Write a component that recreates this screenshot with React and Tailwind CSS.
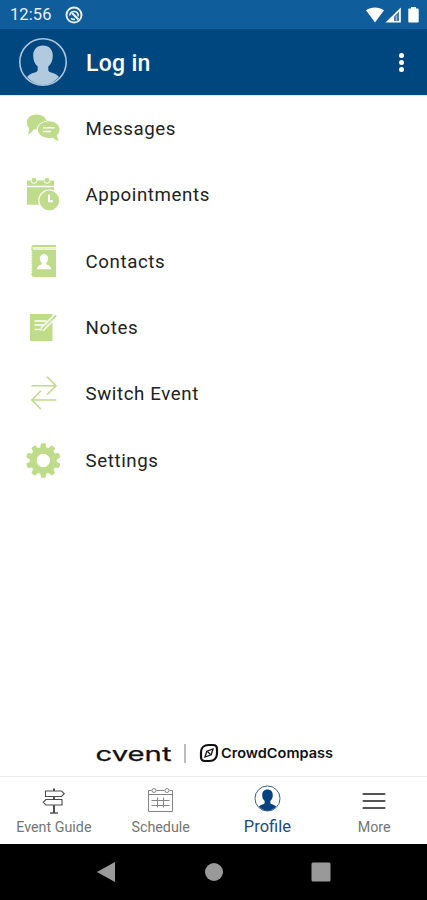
import { useState } from 'react';

const MessagesIcon = () => (
  <svg viewBox="0 0 40 40" className="w-10 h-10" fill="#bfdc8a">
    <path d="M13.5 5.500c5.500 0 9.700 3 9.700 6.600-5 .6-9.200 3.900-9.700 8.400-1 .2-2 .1-3-.1C9 23 7 24.800 4.700 25.500c1-2 1.600-4 1.400-6.300C4.500 17.500 3.800 15.500 3.800 13c0-4.200 4.300-7.500 9.700-7.500z" />
    <path d="M25.700 12.300c6 0 10.800 3.500 10.800 8.200 0 2.400-1 4.200-2.600 5.700.1 2.200 1 4.200 2.300 5.800-2.500-.3-4.800-1.600-6.300-3.500-1.300.4-2.700.6-4.200.6-6 0-10.800-3.800-10.800-8.500s4.800-8.300 10.800-8.300z" />
    <path d="M20 18.800h11.500M20 22.500h7.800" stroke="#fff" strokeWidth="1.400" />
  </svg>
);

const AppointmentsIcon = () => (
  <svg viewBox="0 0 40 40" className="w-10 h-10" fill="#bfdc8a">
    <path d="M4 5.500h27v5.300H4zM4 12.300h27v17.500H4z" />
    <circle cx="11" cy="5.300" r="3" stroke="#fff" />
    <circle cx="24" cy="5.300" r="3" stroke="#fff" />
    <circle cx="26.300" cy="25.500" r="10.500" stroke="#fff" strokeWidth="1.200" />
    <path d="M26 19.500v6.800h4" fill="none" stroke="#fff" strokeWidth="1.900" />
  </svg>
);

const ContactsIcon = () => (
  <svg viewBox="0 0 40 40" className="w-10 h-10" fill="#bfdc8a">
    <path d="M10.500 3H33v2.200H9.500v1.300H33V35H11c-1.500 0-2.500-1-2.500-2.500V5.500C8.500 4 9 3 10.500 3z" />
    <path d="M8.300 9v23" stroke="#fff" strokeWidth="1.800" strokeDasharray="1.300 1.300" />
    <path d="M10 7.200h23" stroke="#fff" strokeWidth="1" />
    <path d="M21 12.300c2.600 0 4.200 1.700 4.200 4.200 0 1.800-.8 3.300-1.900 4.300v1.700c2.600.6 4.500 1.700 4.900 4.700H13.800c.4-3 2.300-4.100 4.900-4.700v-1.700c-1.100-1-1.900-2.500-1.900-4.300 0-2.500 1.600-4.200 4.200-4.200z" fill="#fff" />
  </svg>
);

const NotesIcon = () => (
  <svg viewBox="0 0 40 40" className="w-10 h-10" fill="none">
    <path d="M7 6h22.500v27H7z" fill="#bfdc8a" />
    <path d="M11.500 13h12M11.500 17h9M11.500 21.500h8" stroke="#fff" strokeWidth="1.400" />
    <path d="M19 21.500L34 6.500" stroke="#fff" strokeWidth="4.600" />
    <path d="M19 21.500L33 7.500" stroke="#bfdc8a" strokeWidth="2.200" />
    <path d="M22 18.500l7-7" stroke="#fff" strokeWidth=".6" />
  </svg>
);

const SwitchIcon = () => (
  <svg viewBox="0 0 40 40" className="w-10 h-10" fill="none" stroke="#bfdc8a" strokeWidth="1.600">
    <path d="M8.500 11.700h24.300M24 2.700l9 9-9 9" />
    <path d="M33.300 26H9M17.800 17l-9 9 9 9" />
  </svg>
);

const teeth = [0, 36, 72, 108, 144, 180, 216, 252, 288, 324];

const SettingsIcon = () => (
  <svg viewBox="0 0 40 40" className="w-10 h-10" fill="#bfdc8a">
    {teeth.map((a) => (
      <path key={a} d="M17 8l.9-5c.1-.5.400-.7.900-.7h3c.5 0 .8.200.9.700l.9 5z" transform={`rotate(${a} 20.300 19.500)`} />
    ))}
    <circle cx="20.300" cy="19.500" r="10.100" fill="none" stroke="#bfdc8a" strokeWidth="6.800" />
  </svg>
);

const Avatar = ({ className, ring, color, strokeWidth }) => (
  <svg viewBox="0 0 50 50" className={className}>
    <path d="M25 8.500c6 0 9.800 4 9.800 10 0 5-1.700 8.600-4.500 11v3.200c0 1.500 1.200 2.300 3 2.900 3.500 1 5.800 2.200 7.700 4.400A23 23 0 0 1 25 48 23 23 0 0 1 9 40c1.900-2.200 4.200-3.400 7.700-4.400 1.800-.6 3-1.400 3-2.900v-3.200c-2.800-2.400-4.500-6-4.500-11 0-6 3.800-10 9.800-10z" fill={color} />
    <circle cx="25" cy="25" r="23.200" fill="none" stroke={ring} strokeWidth={strokeWidth} />
  </svg>
);

const GuideIcon = () => (
  <svg viewBox="0 0 26 28" className="w-[26px] h-7" fill="none" stroke="#4d4d4d" strokeWidth="1.100">
    <path d="M4.500 4h16l2.700 2.700-2.700 2.800h-16z" />
    <path d="M21 12.500H5l-2.800 2.800L5 18h16z" />
    <path d="M13 1.500V4M13 9.500v3M13 18v8" strokeWidth="2" />
    <path d="M9 26h8" strokeWidth="1.400" />
  </svg>
);

const ScheduleIcon = () => (
  <svg viewBox="0 0 26 28" className="w-[26px] h-7" fill="none" stroke="#858585" strokeWidth="1">
    <path d="M3.500 3.500h-3v21h24v-21h-3M8.500 3.500h8M.5 7.500h24" />
    <circle cx="6" cy="3.500" r="2" />
    <circle cx="19" cy="3.500" r="2" />
    <path d="M3.500 13.500h18M3.500 18.500h18M9.500 10.500v10M15.500 10.500v10" />
  </svg>
);

const MoreIcon = () => (
  <svg viewBox="0 0 26 28" className="w-[26px] h-7" stroke="#555" strokeWidth="2.200" strokeLinecap="round">
    <path d="M2.500 7h21M2.500 14h21M2.500 21h21" />
  </svg>
);

const menu = [
  { label: 'Messages', icon: MessagesIcon },
  { label: 'Appointments', icon: AppointmentsIcon },
  { label: 'Contacts', icon: ContactsIcon },
  { label: 'Notes', icon: NotesIcon },
  { label: 'Switch Event', icon: SwitchIcon },
  { label: 'Settings', icon: SettingsIcon },
];

const tabs = [
  { label: 'Event Guide', icon: <GuideIcon /> },
  { label: 'Schedule', icon: <ScheduleIcon /> },
  { label: 'Profile', icon: <Avatar className="w-[27px] h-[27px]" ring="#315a8c" color="#06427f" strokeWidth="1.800" /> },
  { label: 'More', icon: <MoreIcon /> },
];

function StatusBar() {
  return (
    <div className="h-[29px] shrink-0 bg-[#105d9b] flex items-center justify-between pl-[10px] pr-[7px] text-[#e8f1f8]">
      <div className="flex items-center gap-[13px] pt-[2px]">
        <span className="text-[16.500px] leading-none tracking-[0.100px]">12:56</span>
        <svg viewBox="0 0 18 18" className="w-[18px] h-[18px] -mt-px" fill="none" stroke="currentColor">
          <circle cx="9" cy="9" r="7.500" strokeWidth="1.900" />
          <path d="M4.800 9.500a4.300 4.300 0 0 1 8.300-1.300v2.300M6 12.300a4.300 4.300 0 0 0 4 .9" strokeWidth="1.600" />
          <path d="M7 7l6.500 6.500" strokeWidth="2.200" />
        </svg>
      </div>
      <svg viewBox="0 0 54 18" className="w-[54px] h-[18px]" fill="#fff">
        <path d="M0 4.300C5.500.7 12.500.7 18 4.300L9 16.500z" />
        <path d="M19.500 16.500L34.800 1.500v15z" />
        <path d="M28 10.500L33 5.500V15h-5z" fill="#105d9b" opacity=".8" />
        <path d="M30.300 9.500v5.500" stroke="#fff" strokeWidth="1" opacity=".6" />
        <path d="M45 1h5v1.500h1.500c.8 0 1.200.4 1.200 1.200v11.600c0 .8-.4 1.200-1.200 1.200h-8c-.8 0-1.200-.4-1.200-1.200V3.700c0-.8.4-1.200 1.200-1.200H45z" />
      </svg>
    </div>
  );
}

export default function App() {
  const [active, setActive] = useState('Profile');

  return (
    <div className="w-full h-screen flex flex-col bg-white overflow-hidden font-['Roboto',sans-serif]">
      <StatusBar />

      <header className="h-[66px] shrink-0 bg-[#00467f] flex items-center pl-[18px] pr-[23px]">
        <Avatar className="w-[50px] h-[50px]" ring="#a9c4da" color="#b1cadd" strokeWidth="1.600" />
        <h1 className="ml-[18px] pt-[2px] text-[23px] leading-none tracking-[0.300px] font-medium text-white">Log in</h1>
        <div className="ml-auto flex flex-col gap-[2px]">
          <span className="w-[5px] h-[5px] rounded-full bg-white" />
          <span className="w-[5px] h-[5px] rounded-full bg-white" />
          <span className="w-[5px] h-[5px] rounded-full bg-white" />
        </div>
      </header>

      <main className="flex-1 flex flex-col border-t border-gray-200">
        {menu.map(({ label, icon: Icon }) => (
          <button key={label} className="h-[66.300px] flex items-center gap-[22.500px] pl-[23px] text-left">
            <Icon />
            <span className="text-[18.700px] leading-6 tracking-[0.600px] text-[#222]">{label}</span>
          </button>
        ))}

        {/* Branding */}
        <div className="mt-auto mb-[11px] h-6 flex items-center pl-[95px]">
          <svg viewBox="0 0 78 24" className="w-[78px] h-6">
            <text x="0.500" y="19.500" textLength="76" lengthAdjust="spacingAndGlyphs" className="font-['Inter',sans-serif] text-[20px]" fill="#111" stroke="#111" strokeWidth=".25">cvent</text>
          </svg>
          <span className="ml-[11px] w-[2px] h-[19px] bg-[#bdbdbd]" />
          <svg viewBox="0 0 20 20" className="ml-[13px] w-5 h-5" fill="none" stroke="#111">
            <path d="M9.500 2h4.500c2.800 0 4 1.200 4 4v4.500c0 4.500-3 7.500-7.500 7.500H6c-2.800 0-4-1.200-4-4V9.500C2 5 5 2 9.500 2z" strokeWidth="2.200" />
            <path d="M14 6l-1.800 5.800L6 14l1.800-5.800z" strokeWidth="1.300" />
            <path d="M8.500 8.500l3 3" strokeWidth="1.300" />
          </svg>
          <svg viewBox="0 0 114 24" className="ml-[2px] w-[114px] h-6">
            <text x="0" y="17" textLength="112" lengthAdjust="spacingAndGlyphs" className="font-['Inter',sans-serif] text-[13.500px] font-semibold" fill="#111">CrowdCompass</text>
          </svg>
        </div>
      </main>

      <nav className="h-[68px] shrink-0 grid grid-cols-4 border-t border-[#ededed] bg-white">
        {tabs.map(({ label, icon }) => (
          <button key={label} onClick={() => setActive(label)} className="flex flex-col items-center pl-px">
            <span className={active === label ? 'h-[38px] pt-2' : 'h-[38px] pt-[10px]'}>{icon}</span>
            <span className={active === label ? 'text-[16.500px] leading-6 text-[#1d4a80]' : 'text-[14.300px] leading-6 text-[#757575]'}>
              {label}
            </span>
          </button>
        ))}
      </nav>

      <div className="h-14 shrink-0 bg-black flex items-center justify-center">
        <svg viewBox="0 0 234 20" className="w-[234px] h-5" fill="#999">
          <path d="M0 10L18 0v20z" />
          <circle cx="117" cy="10" r="9" />
          <rect x="214.500" y=".500" width="19" height="19" rx="1.500" />
        </svg>
      </div>
    </div>
  );
}
